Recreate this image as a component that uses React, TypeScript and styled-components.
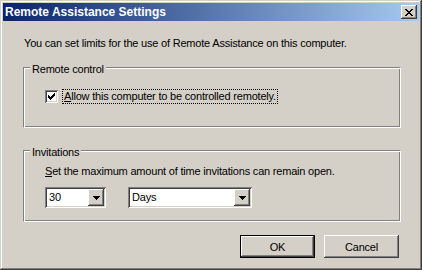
import styled, { createGlobalStyle } from "styled-components";

const GlobalStyle = createGlobalStyle`
    body {
        margin: 0;
        font-family: "Liberation Sans", Arial, sans-serif;
        font-size: 11px;
        letter-spacing: -0.2px;
        color: #000;
    }
`;

const raised = `
    box-shadow: inset -1px -1px #404040, inset 1px 1px #ffffff,
        inset -2px -2px #808080, inset 2px 2px #d4d0c8;
`;

const sunken = `
    box-shadow: inset 1px 1px #808080, inset -1px -1px #ffffff,
        inset 2px 2px #404040, inset -2px -2px #d4d0c8;
`;

const Window = styled.div`
    width: 422px;
    height: 270px;
    box-sizing: border-box;
    padding: 3px;
    background: #d4d0c8;
    display: flex;
    flex-direction: column;
    box-shadow: inset -1px -1px #404040, inset 1px 1px #d4d0c8,
        inset -2px -2px #808080, inset 2px 2px #ffffff;
`;

const TitleBar = styled.div`
    height: 18px;
    display: flex;
    align-items: center;
    justify-content: space-between;
    padding: 0 2px;
    background: linear-gradient(to right, #0a246a, #a6caf0);
`;

const Title = styled.span`
    color: #fff;
    font-weight: bold;
    font-size: 12px;
    letter-spacing: 0;
    line-height: 14px;
`;

const CloseButton = styled.div`
    width: 16px;
    height: 14px;
    background: #d4d0c8;
    display: flex;
    align-items: center;
    justify-content: center;
    ${raised}
`;

const Content = styled.div`
    display: flex;
    flex-direction: column;
    padding: 0 18px 0 20px;
`;

const Intro = styled.div`
    line-height: 13px;
    margin: 16px 0 0 1px;
`;

const Group = styled.div<{ $top: number; $bottom: number }>`
    margin-top: ${p => p.$top}px;
    display: flex;
    flex-direction: column;
    align-items: flex-start;
    border: 1px solid;
    border-color: #808080 #ffffff #ffffff #808080;
    box-shadow: inset 1px 1px #ffffff, inset -1px -1px #808080;
    padding: 0 0 ${p => p.$bottom}px 21px;
`;

const Legend = styled.span`
    margin: -5px 0 0 -15px;
    padding: 0 2px;
    line-height: 13px;
    background: #d4d0c8;
`;

const CheckRow = styled.div`
    display: flex;
    align-items: center;
    gap: 5px;
    margin-top: 14px;
`;

const CheckBox = styled.div`
    width: 13px;
    height: 13px;
    box-sizing: border-box;
    background: #fff;
    display: flex;
    align-items: center;
    justify-content: center;
    ${sunken}
`;

const FocusLabel = styled.span`
    line-height: 13px;
    padding: 0 1px;
    outline: 1px dotted #000;
`;

const Line = styled.div`
    line-height: 13px;
    margin-top: 6px;
`;

const ComboRow = styled.div`
    display: flex;
    gap: 22px;
    margin-top: 9px;
`;

const Combo = styled.div<{ $width: number }>`
    width: ${p => p.$width}px;
    height: 21px;
    box-sizing: border-box;
    padding: 2px;
    background: #fff;
    display: flex;
    align-items: center;
    ${sunken}
`;

const ComboText = styled.span`
    flex: 1;
    padding-left: 2px;
    line-height: 13px;
`;

const ComboArrow = styled.div`
    width: 16px;
    height: 17px;
    background: #d4d0c8;
    display: flex;
    align-items: center;
    justify-content: center;
    ${raised}
`;

const ButtonRow = styled.div`
    display: flex;
    justify-content: flex-end;
    gap: 9px;
    margin: 13px 2px 0 0;
`;

const Button = styled.div<{ $default?: boolean }>`
    width: 75px;
    height: 23px;
    box-sizing: border-box;
    display: flex;
    align-items: center;
    justify-content: center;
    background: #d4d0c8;
    ${raised}
    ${p => p.$default && `
        border: 1px solid #000;
    `}
`;

function CloseGlyph() {
    return (
        <svg width="8" height="7" viewBox="0 0 8 7" shapeRendering="crispEdges">
            <path d="M0 0h2v1h-2zM6 0h2v1h-2zM1 1h2v1h-2zM5 1h2v1h-2zM2 2h4v1h-4zM3 3h2v1h-2zM2 4h4v1h-4zM1 5h2v1h-2zM5 5h2v1h-2zM0 6h2v1h-2zM6 6h2v1h-2z" fill="#000" />
        </svg>
    );
}

function CheckGlyph() {
    return (
        <svg width="7" height="7" viewBox="0 0 7 7" shapeRendering="crispEdges">
            <path d="M6 0h1v1h-1zM5 1h2v1h-2zM0 2h1v1h-1zM4 2h3v1h-3zM0 3h2v1h-2zM3 3h3v1h-3zM0 4h5v1h-5zM1 5h3v1h-3zM2 6h1v1h-1z" fill="#000" />
        </svg>
    );
}

function ArrowGlyph() {
    return (
        <svg width="7" height="4" viewBox="0 0 7 4" shapeRendering="crispEdges">
            <path d="M0 0h7v1h-7zM1 1h5v1h-5zM2 2h3v1h-3zM3 3h1v1h-1z" fill="#000" />
        </svg>
    );
}

function App() {
    return (
        <>
            <GlobalStyle />
            <Window>
                <TitleBar>
                    <Title>Remote Assistance Settings</Title>
                    <CloseButton>
                        <CloseGlyph />
                    </CloseButton>
                </TitleBar>
                <Content>
                    <Intro>You can set limits for the use of Remote Assistance on this computer.</Intro>
                    <Group $top={17} $bottom={24}>
                        <Legend>Remote control</Legend>
                        <CheckRow>
                            <CheckBox>
                                <CheckGlyph />
                            </CheckBox>
                            <FocusLabel>
                                <u>A</u>llow this computer to be controlled remotely.
                            </FocusLabel>
                        </CheckRow>
                    </Group>
                    <Group $top={22} $bottom={13}>
                        <Legend>Invitations</Legend>
                        <Line>
                            <u>S</u>et the maximum amount of time invitations can remain open.
                        </Line>
                        <ComboRow>
                            <Combo $width={61}>
                                <ComboText>30</ComboText>
                                <ComboArrow>
                                    <ArrowGlyph />
                                </ComboArrow>
                            </Combo>
                            <Combo $width={124}>
                                <ComboText>Days</ComboText>
                                <ComboArrow>
                                    <ArrowGlyph />
                                </ComboArrow>
                            </Combo>
                        </ComboRow>
                    </Group>
                    <ButtonRow>
                        <Button $default>OK</Button>
                        <Button>Cancel</Button>
                    </ButtonRow>
                </Content>
            </Window>
        </>
    );
}

export default App;
